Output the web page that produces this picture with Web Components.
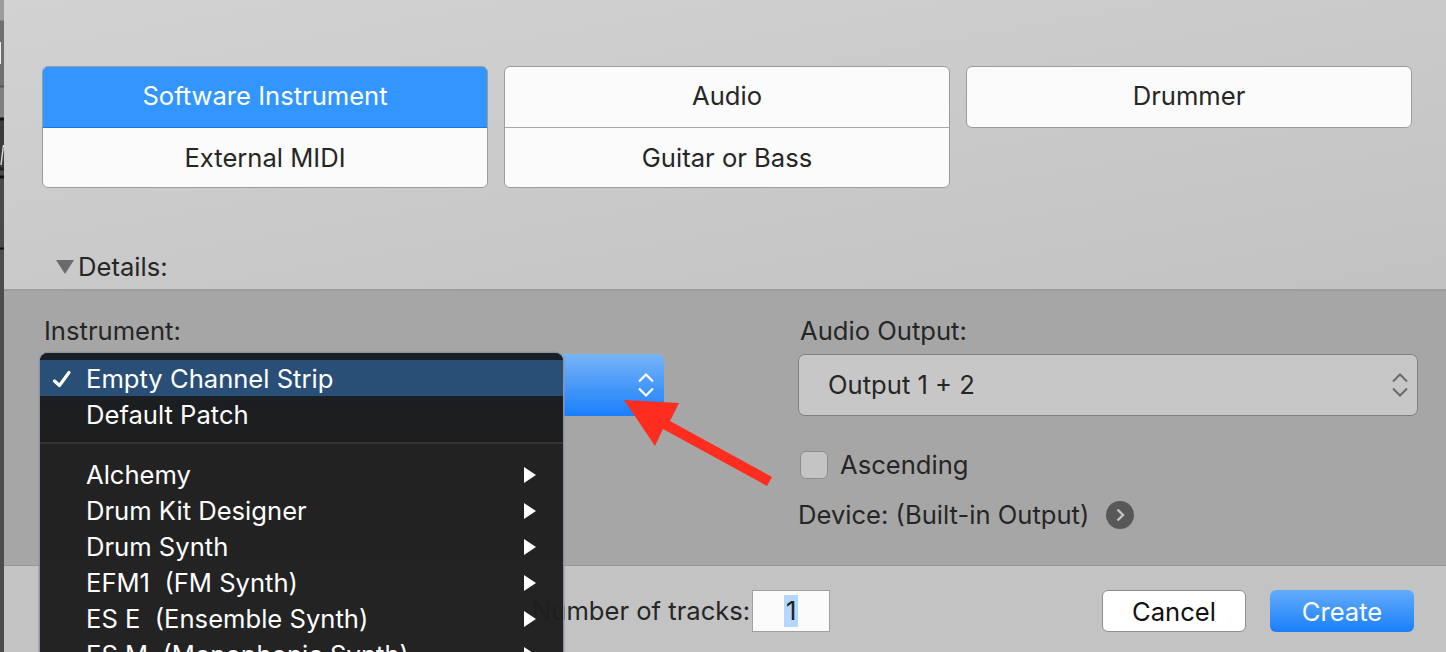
<!DOCTYPE html>
<html>
<head>
<meta charset="utf-8">
<title>New Track</title>
<style>
 html, body {
  margin: 0;
  height: 100%;
  overflow: hidden;
  background: #c6c6c6;
 }
 body {
  display: flex;
  font-family: Inter, "Liberation Sans", sans-serif;
  color: #262626;
 }
</style>
</head>
<body>
<track-dialog>
 <type-picker slot="top"></type-picker>
 <details-panel slot="panel"></details-panel>
 <dialog-footer slot="footer"></dialog-footer>
 <instrument-menu slot="over"></instrument-menu>
 <red-arrow slot="over"></red-arrow>
</track-dialog>

<script>
class TrackDialog extends HTMLElement {
 constructor() {
  super()
  this.attachShadow({ mode: "open" }).innerHTML = `<style>
   :host {
    position: relative;
    display: flex;
    width: 1446px;
    height: 652px;
    overflow: hidden;
   }
   .edge {
    position: relative;
    flex: 0 0 4px;
    background:
     linear-gradient(#eee, #eee) 0 42px / 1px 22px no-repeat,
     linear-gradient(#9c9c9c 0, #9c9c9c 20px, #707070 21px,
      #707070 85px, #555 86px, #555 87px, #808080 88px, #808080 117px,
      #111 118px, #111 120px, #3a3a3a 121px, #3a3a3a 167px, #222 168px,
      #222 170px, #4a4a4a 171px, #4a4a4a 175px, #111 176px, #111 178px,
      #4a4a4a 179px, #4a4a4a 247px, #111 248px, #111 249px,
      #4c4c4c 250px, #4c4c4c 652px);
   }
   .edge svg {
    position: absolute;
    left: 0;
    top: 144px;
   }
   .body {
    flex: 1;
    min-width: 0;
    display: flex;
    flex-direction: column;
   }
  </style>
  <div class="edge">
   <svg width="4" height="22" viewBox="0 0 4 22"><path d="M3.5 1L1 21" fill="none" stroke="#ddd" stroke-width="1.4"/></svg>
  </div>
  <div class="body">
   <slot name="top"></slot>
   <slot name="panel"></slot>
   <slot name="footer"></slot>
  </div>
  <slot name="over"></slot>`
 }
}

class TypePicker extends HTMLElement {
 constructor() {
  super()
  this.attachShadow({ mode: "open" }).innerHTML = `<style>
   :host {
    display: block;
    box-sizing: border-box;
    height: 289px;
    padding: 66px 34px 0 38px;
    background: linear-gradient(170deg, #d2d2d2, #c2c2c2);
   }
   .grid {
    display: grid;
    grid-template-columns: repeat(3, 446px);
    column-gap: 16px;
    align-items: start;
    height: 122px;
   }
   .group {
    display: flex;
    flex-direction: column;
    box-sizing: border-box;
    border: 1px solid #9c9c9c;
    border-radius: 6px;
    background: #fbfbfb;
    overflow: hidden;
    font-size: 25.6px;
   }
   .cell {
    display: flex;
    align-items: center;
    justify-content: center;
    box-sizing: border-box;
    height: 60px;
    padding-bottom: 3px;
   }
   .cell + .cell {
    padding-bottom: 1px;
    border-top: 1px solid #a8a8a8;
   }
   .sel {
    background: #3395ff;
    color: #fff;
    box-shadow: 0 0 0 1px #1f74e8;
   }
   .sel + .cell {
    border-top-color: #1f74e8;
   }
   .details {
    display: flex;
    align-items: center;
    gap: 4px;
    margin: 64px 0 0 14px;
    font-size: 25.6px;
    line-height: 30px;
   }
   svg { display: block; }
  </style>
  <div class="grid">
   <div class="group">
    <div class="cell sel">Software Instrument</div>
    <div class="cell">External MIDI</div>
   </div>
   <div class="group">
    <div class="cell">Audio</div>
    <div class="cell">Guitar or Bass</div>
   </div>
   <div class="group">
    <div class="cell">Drummer</div>
   </div>
  </div>
  <div class="details">
   <svg width="18" height="14" viewBox="0 0 18 14"><path d="M0 0h18L9 14z" fill="#6b6b6b"/></svg>
   Details:
  </div>`
 }
}

class DetailsPanel extends HTMLElement {
 constructor() {
  super()
  this.attachShadow({ mode: "open" }).innerHTML = `<style>
   :host {
    display: grid;
    grid-template-columns: 624px 620px;
    column-gap: 134px;
    box-sizing: border-box;
    height: 277px;
    padding: 25px 28px 0 36px;
    background: #a6a6a6;
    border-top: 2px solid #9d9d9d;
    border-bottom: 1px solid #979797;
    font-size: 25.6px;
   }
   .label {
    line-height: 30px;
    margin-left: 4px;
   }
   .popup {
    display: flex;
    align-items: center;
    justify-content: flex-end;
    box-sizing: border-box;
    height: 62px;
    margin-top: 8px;
    padding-right: 8px;
    border-radius: 7px;
    background: linear-gradient(#77b4f7, #1a7ffb);
   }
   .right .label { margin-left: 2px; }
   .right .popup {
    justify-content: space-between;
    padding: 0 7px 0 29px;
    background: #c7c7c7;
    border: 1px solid #808080;
   }
   .right .popup span { margin-bottom: 2px; }
   .check {
    display: flex;
    align-items: center;
    gap: 12px;
    margin: 34px 0 0 2px;
    line-height: 30px;
   }
   .box {
    box-sizing: border-box;
    width: 28px;
    height: 28px;
    border-radius: 6px;
    background: #c4c4c4;
    border: 1px solid #8c8c8c;
   }
   .device {
    display: flex;
    align-items: center;
    gap: 17px;
    margin-top: 20px;
    line-height: 30px;
   }
   svg { display: block; }
  </style>
  <div class="left">
   <div class="label">Instrument:</div>
   <div class="popup">
    <svg width="20" height="28" viewBox="0 0 20 28" fill="none" stroke="#fff" stroke-width="2.2">
     <path d="M3 10.5l7-7 7 7M3 17.5l7 7 7-7"/>
    </svg>
   </div>
  </div>
  <div class="right">
   <div class="label">Audio Output:</div>
   <div class="popup">
    <span>Output 1 + 2</span>
    <svg width="20" height="28" viewBox="0 0 20 28" fill="none" stroke="#6a6a6a" stroke-width="2">
     <path d="M3 10.5l7-7 7 7M3 17.5l7 7 7-7"/>
    </svg>
   </div>
   <div class="check"><span class="box"></span>Ascending</div>
   <div class="device">
    <span>Device: (Built-in Output)</span>
    <svg width="28" height="28" viewBox="0 0 28 28">
     <circle cx="14" cy="14" r="14" fill="#585858"/>
     <path d="M11.5 8.5l5.5 5.5-5.5 5.5" fill="none" stroke="#c4c4c4" stroke-width="2.4"/>
    </svg>
   </div>
  </div>`
 }
}

class DialogFooter extends HTMLElement {
 constructor() {
  super()
  this.attachShadow({ mode: "open" }).innerHTML = `<style>
   :host {
    display: flex;
    align-items: center;
    box-sizing: border-box;
    height: 86px;
    padding: 3px 32px 0 528px;
    background: #c3c3c3;
    font-size: 25.6px;
   }
   .count {
    box-sizing: border-box;
    display: flex;
    align-items: center;
    justify-content: center;
    width: 78px;
    height: 42px;
    margin-left: 2px;
    background: #fbfbfb;
    border: 1px solid #a0a0a0;
   }
   .count span {
    background: #b3d7ff;
    line-height: 32px;
    padding: 0 2px;
    color: #222;
   }
   .btn {
    box-sizing: border-box;
    display: flex;
    align-items: center;
    justify-content: center;
    width: 144px;
    height: 42px;
    padding-top: 1px;
    border-radius: 6px;
   }
   .cancel {
    margin-left: auto;
    background: #fff;
    border: 1px solid #8f8f8f;
    color: #111;
   }
   .create {
    margin-left: 24px;
    background: linear-gradient(#63acfb, #1a7ffb);
    color: #fff;
   }
  </style>
  <span>Number of tracks:</span>
  <div class="count"><span>1</span></div>
  <div class="btn cancel">Cancel</div>
  <div class="btn create">Create</div>`
 }
}

class MenuItem extends HTMLElement {
 constructor() {
  super()
  this.attachShadow({ mode: "open" }).innerHTML = `<style>
   :host {
    display: flex;
    align-items: center;
    position: relative;
    box-sizing: border-box;
    height: 36px;
    padding: 0 27px 0 46px;
    color: #fff;
   }
   :host([selected]) { background: #2a4f76; }
   .label { white-space: pre; }
   .tick {
    position: absolute;
    left: 12px;
    top: 8px;
    display: none;
   }
   :host([selected]) .tick { display: block; }
   .sub {
    margin: 2px 0 0 auto;
    display: none;
   }
   :host([sub]) .sub { display: block; }
  </style>
  <svg class="tick" width="20" height="20" viewBox="0 0 20 20"><path d="M2.5 13l5 4.5L17 4.5" fill="none" stroke="#fff" stroke-width="3.2" stroke-linecap="round" stroke-linejoin="round"/></svg>
  <span class="label"><slot></slot></span>
  <svg class="sub" width="12" height="16" viewBox="0 0 12 16"><path d="M0 0l12 8L0 16z" fill="#fff"/></svg>`
 }
}

class InstrumentMenu extends HTMLElement {
 constructor() {
  super()
  const subs = ["Alchemy", "Drum Kit Designer", "Drum Synth",
   "EFM1  (FM Synth)", "ES E  (Ensemble Synth)", "ES M  (Monophonic Synth)"]
  this.attachShadow({ mode: "open" }).innerHTML = `<style>
   :host {
    position: absolute;
    left: 40px;
    top: 353px;
    width: 523px;
    height: 320px;
    box-sizing: border-box;
    padding-top: 7px;
    border-radius: 8px 8px 0 0;
    background: rgba(30, 30, 30, .97);
    box-shadow: 0 0 0 1.5px #8d96a0;
    font-size: 25.6px;
   }
   .top {
    background: linear-gradient(#181e26, #1e1e1e);
    margin-top: -7px;
    padding-top: 7px;
    padding-bottom: 10px;
    border-radius: 8px 8px 0 0;
   }
   hr {
    margin: 0;
    border: 0;
    height: 2px;
    background: #333;
   }
   .list { padding-top: 12px; }
  </style>
  <div class="top">
   <menu-item selected>Empty Channel Strip</menu-item>
   <menu-item>Default Patch</menu-item>
  </div>
  <hr>
  <div class="list">
   ${subs.map((s) => `<menu-item sub>${s}</menu-item>`).join("")}
  </div>`
 }
}

class RedArrow extends HTMLElement {
 constructor() {
  super()
  this.attachShadow({ mode: "open" }).innerHTML = `<style>
   :host {
    position: absolute;
    left: 620px;
    top: 395px;
    width: 160px;
    height: 100px;
   }
  </style>
  <svg width="160" height="100" viewBox="620 395 160 100">
   <path d="M624 400L679 403L670 421L772 477L767 486L663 429L655 446z" fill="#ff2d1f"/>
  </svg>`
 }
}

customElements.define("track-dialog", TrackDialog)
customElements.define("type-picker", TypePicker)
customElements.define("details-panel", DetailsPanel)
customElements.define("dialog-footer", DialogFooter)
customElements.define("menu-item", MenuItem)
customElements.define("instrument-menu", InstrumentMenu)
customElements.define("red-arrow", RedArrow)
</script>
</body>
</html>
